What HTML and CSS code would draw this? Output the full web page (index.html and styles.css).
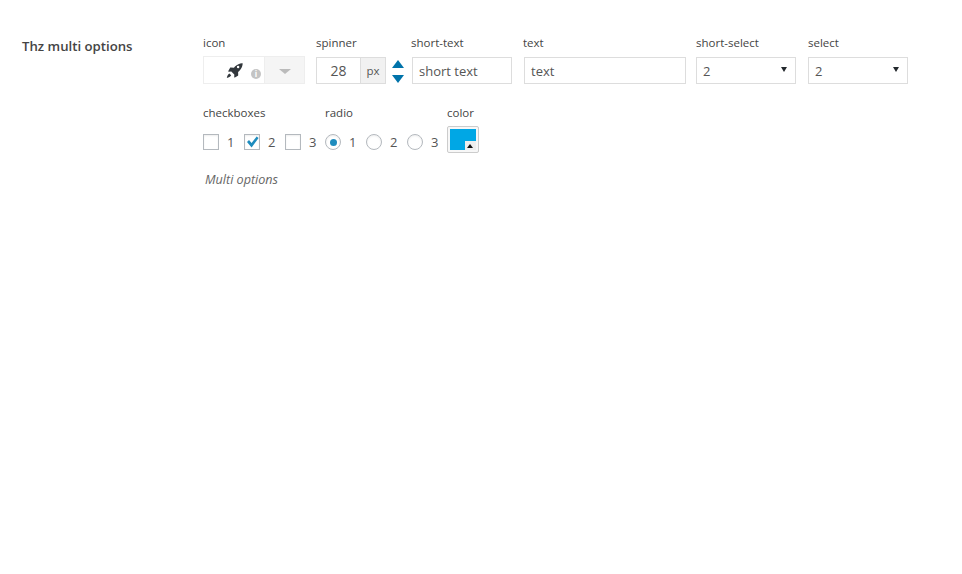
FILE: index.html
```html
<!DOCTYPE html>
<html lang="en">
<head>
  <meta charset="UTF-8">
  <title>Thz multi options</title>
  <link rel="stylesheet" href="styles.css">
</head>
<body>
  <main class="option">
    <div class="option-title">Thz multi options</div>
    <div class="option-body">
      <div class="row row-top">
        <div class="field field-icon">
          <div class="field-label">icon</div>
          <div class="icon-picker">
            <div class="icon-preview">
              <svg class="rocket" viewBox="0 0 20 20" width="19" height="19">
                <path d="M18.6 1.3c.2 3.6-1 6.6-3.6 9.1l-1.2 1.1.1 3.4c0 .3-.1.5-.3.6l-3.2 1.9c-.4.2-.7 0-.7-.4l.1-2.7-3.2-3.2-2.7.1c-.4 0-.6-.4-.4-.7l1.9-3.3c.1-.2.4-.3.6-.3l3.4.1 1.1-1.2c2.5-2.5 5.6-3.8 8.1-3.5z M13.8 5a1.3 1.3 0 1 0 0 2.6 1.3 1.3 0 0 0 0-2.6z" fill-rule="evenodd"/>
                <path d="M4.6 13.2l1.9 1.9c-.9 1.5-2.4 2.4-4.6 2.8.4-2.2 1.3-3.8 2.7-4.7z"/>
              </svg>
              <span class="info-dot">i</span>
            </div>
            <div class="icon-toggle"><span class="caret"></span></div>
          </div>
        </div>
        <div class="field field-spinner">
          <div class="field-label">spinner</div>
          <div class="spinner">
            <div class="spinner-value">28</div>
            <div class="spinner-unit">px</div>
            <div class="spinner-arrows">
              <span class="arrow-up"></span>
              <span class="arrow-down"></span>
            </div>
          </div>
        </div>
        <div class="field field-short-text">
          <div class="field-label">short-text</div>
          <div class="input input-short">short text</div>
        </div>
        <div class="field field-text">
          <div class="field-label">text</div>
          <div class="input input-long">text</div>
        </div>
        <div class="field field-select">
          <div class="field-label">short-select</div>
          <div class="input select">2<span class="select-arrow"></span></div>
        </div>
        <div class="field">
          <div class="field-label">select</div>
          <div class="input select">2<span class="select-arrow"></span></div>
        </div>
      </div>
      <div class="row row-bottom">
        <div class="field field-checks">
          <div class="field-label">checkboxes</div>
          <div class="choices">
            <div class="choice"><span class="checkbox"></span>1</div>
            <div class="choice">
              <span class="checkbox">
                <svg viewBox="0 0 16 16" width="16" height="16"><path d="M3 8l2-2 2.6 3 5-6.5 2 1.5-7 9.6z" fill="#1e8cbe"/></svg>
              </span>2
            </div>
            <div class="choice"><span class="checkbox"></span>3</div>
          </div>
        </div>
        <div class="field field-radios">
          <div class="field-label">radio</div>
          <div class="choices">
            <div class="choice"><span class="radio radio-on"></span>1</div>
            <div class="choice"><span class="radio"></span>2</div>
            <div class="choice"><span class="radio"></span>3</div>
          </div>
        </div>
        <div class="field">
          <div class="field-label">color</div>
          <div class="color-box">
            <div class="color-swatch"><span class="color-toggle"></span></div>
          </div>
        </div>
      </div>
      <div class="description">Multi options</div>
    </div>
  </main>
</body>
</html>
```

FILE: styles.css
```css
body {
  margin: 0;
  background: #fff;
  color: #444;
  font-family: 'Open Sans', 'Noto Sans', sans-serif;
  font-size: 13px;
}
.option {
  display: flex;
  padding: 36px 0 0 22px;
}
.option-title {
  width: 181px;
  font-size: 13.2px;
  font-weight: 600;
  line-height: 20px;
  color: #444;
}
.option-body {
  margin-top: -1px;
}
.row {
  display: flex;
}
.row-bottom {
  margin-top: 21px;
}
.field-label {
  height: 21px;
  font-size: 11.5px;
  line-height: 15px;
  color: #444;
}

/* Icon picker */
.field-icon {
  width: 113px;
}
.icon-picker {
  display: flex;
  width: 102px;
  height: 28px;
  box-sizing: border-box;
  border: 1px solid #eee;
}
.icon-preview {
  position: relative;
  width: 60px;
  border-right: 1px solid #eee;
}
.rocket {
  position: absolute;
  left: 21px;
  top: 4px;
  fill: #32373c;
}
.info-dot {
  position: absolute;
  left: 47px;
  top: 12px;
  width: 10px;
  height: 10px;
  border-radius: 50%;
  background: #c4c4c4;
  color: #fff;
  font-size: 8px;
  font-weight: 700;
  line-height: 10px;
  text-align: center;
}
.icon-toggle {
  flex: 1;
  display: flex;
  align-items: center;
  justify-content: center;
  background: #f5f5f5;
}
.caret {
  margin-top: 3px;
  border-top: 5px solid #bbb;
  border-left: 6px solid transparent;
  border-right: 6px solid transparent;
}

/* Spinner */
.field-spinner {
  width: 95px;
}
.spinner {
  display: flex;
  height: 27px;
  margin-top: 1px;
}
.spinner-value {
  width: 43px;
  border: 1px solid #ddd;
  border-right: 0;
  font-size: 14px;
  line-height: 26px;
  text-align: center;
  color: #555;
}
.spinner-unit {
  width: 24px;
  border: 1px solid #ddd;
  background: #f1f1f1;
  font-size: 11.5px;
  line-height: 26px;
  text-align: center;
  color: #555;
}
.spinner-arrows {
  display: flex;
  flex-direction: column;
  gap: 7px;
  margin: 3px 0 0 6px;
}
.arrow-up, .arrow-down {
  border-left: 6px solid transparent;
  border-right: 6px solid transparent;
}
.arrow-up {
  border-bottom: 8px solid #0073aa;
}
.arrow-down {
  border-top: 8px solid #0073aa;
}

/* Text inputs and selects */
.input {
  box-sizing: border-box;
  height: 27px;
  margin-top: 1px;
  padding-left: 6px;
  border: 1px solid #ddd;
  font-size: 13px;
  line-height: 26px;
  color: #555;
}
.field-short-text {
  width: 112px;
}
.input-short {
  width: 100px;
  margin-left: 1px;
}
.field-text {
  width: 173px;
}
.input-long {
  width: 162px;
  margin-left: 1px;
}
.field-select {
  width: 112px;
}
.select {
  position: relative;
  width: 100px;
}
.select-arrow {
  position: absolute;
  right: 8px;
  top: 9px;
  border-top: 5px solid #23282d;
  border-left: 3px solid transparent;
  border-right: 3px solid transparent;
}

/* Checkboxes and radios */
.field-checks {
  width: 122px;
}
.field-radios {
  width: 122px;
}
.choices {
  display: flex;
  gap: 9.5px;
  margin-top: 8px;
}
.choice {
  display: flex;
  align-items: center;
  gap: 8px;
  height: 16px;
  font-size: 13px;
  color: #555;
}
.checkbox, .radio {
  box-sizing: border-box;
  width: 16px;
  height: 16px;
  border: 1px solid #b4b9be;
  background: #fff;
  box-shadow: inset 0 1px 2px rgba(0, 0, 0, 0.07);
}
.checkbox svg {
  display: block;
  margin: -1px;
}
.radio {
  display: flex;
  align-items: center;
  justify-content: center;
  border-radius: 50%;
}
.radio-on::before {
  content: '';
  width: 7px;
  height: 7px;
  border-radius: 50%;
  background: #1e8cbe;
}

/* Color picker */
.color-box {
  box-sizing: border-box;
  width: 32px;
  height: 27px;
  padding: 2px;
  border: 1px solid #ccc;
  border-radius: 2px;
  background: #f7f7f7;
}
.color-swatch {
  position: relative;
  height: 21px;
  background: #00a7e5;
}
.color-toggle {
  position: absolute;
  right: 0;
  bottom: 0;
  width: 11px;
  height: 9px;
  background: #eee;
}
.color-toggle::before {
  content: '';
  position: absolute;
  left: 2px;
  top: 3px;
  border-bottom: 4px solid #111;
  border-left: 3px solid transparent;
  border-right: 3px solid transparent;
}

.description {
  margin: 18px 0 0 2px;
  font-size: 12.6px;
  font-style: italic;
  line-height: 17px;
  color: #666;
}
```
